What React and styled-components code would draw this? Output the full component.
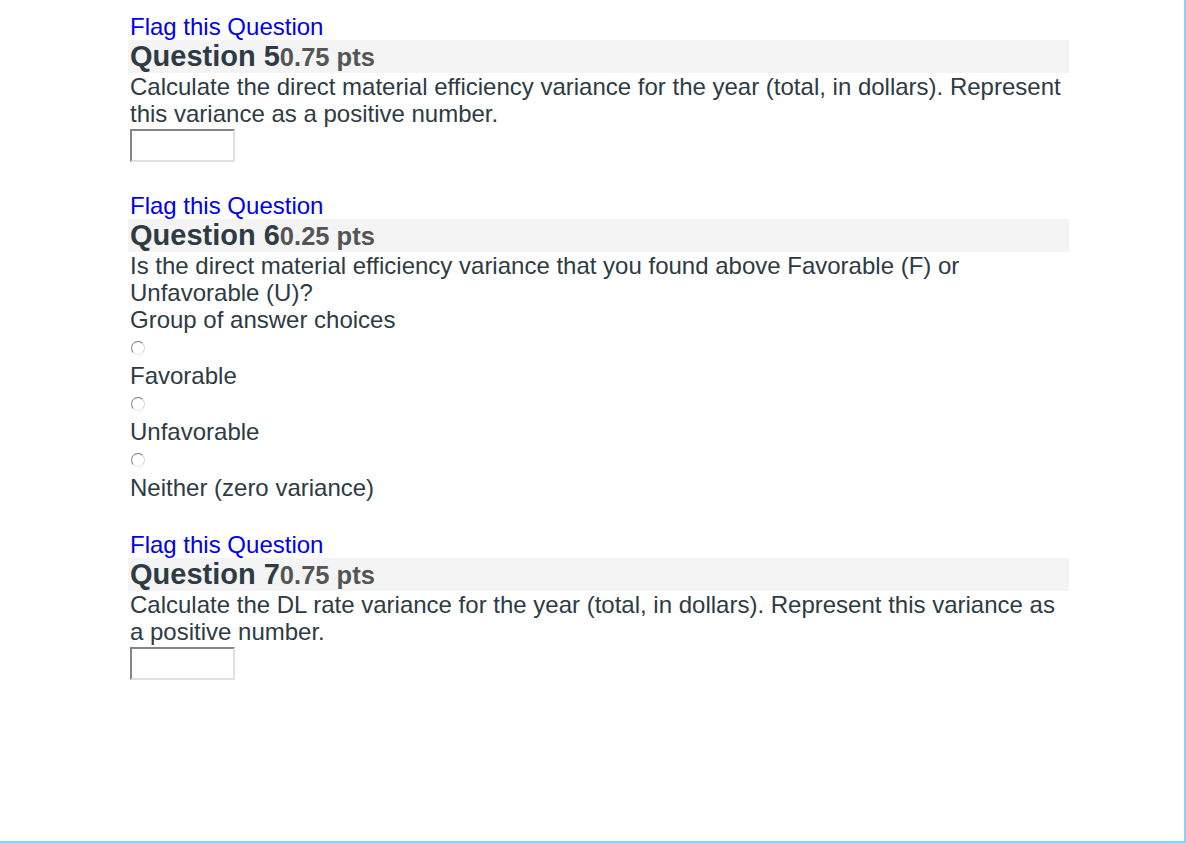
import React from 'react';
import styled, { createGlobalStyle } from 'styled-components';

const Global = createGlobalStyle`
  html, body {
    margin: 0;
    padding: 0;
    background: #ffffff;
  }
  body {
    font-family: "Liberation Sans", Arial, sans-serif;
  }
`

const Page = styled.div`
  box-sizing: border-box;
  width: 1186px;
  height: 843px;
  border-right: 2px solid #87d4f5;
  border-bottom: 2px solid #87d4f5;
  padding: 13px 0 0 128px;
  overflow: hidden;
`

const Column = styled.div`
  width: 941px;
  display: flex;
  flex-direction: column;
  gap: 30px;
`

const Question = styled.div`
  display: flex;
  flex-direction: column;
`

const Flag = styled.a`
  color: #0000ee;
  font-size: 24px;
  line-height: 27px;
  padding-left: 2px;
  text-decoration: none;
  cursor: pointer;
`

const Header = styled.div`
  background: #f4f4f4;
  height: 33px;
  display: flex;
  align-items: baseline;
  padding-left: 2px;
  color: #2d3b45;
  font-size: 29px;
  line-height: 33px;
  font-weight: 700;
`

const Points = styled.span`
  color: #555555;
  font-size: 25.5px;
`

const Text = styled.div`
  color: #2d3b45;
  font-size: 24px;
  line-height: 27px;
  padding-left: 2px;
`

const Answer = styled.input`
  box-sizing: border-box;
  width: 105px;
  height: 33px;
  margin: 2px 0 0 2px;
  border: 2px solid;
  border-color: #858585 #e0e0e0 #e0e0e0 #858585;
  background: #fff;
  outline: none;
`

const Choices = styled.div`
  display: flex;
  flex-direction: column;
`

const RadioRow = styled.div`
  height: 29px;
  display: flex;
  align-items: center;
  padding-left: 3px;
`

const Radio = styled.input`
  appearance: none;
  box-sizing: border-box;
  width: 14px;
  height: 14px;
  margin: 0;
  border-radius: 50%;
  border: 1px solid;
  border-color: #7a7a7a #d6d6d6 #e6e6e6 #8a8a8a;
  background: #fff;
`

function Choice({ label, name }) {
  return (
    <>
      <RadioRow><Radio type="radio" name={name} /></RadioRow>
      <Text>{label}</Text>
    </>
  );
}

export default function App() {
  return (
    <>
      <Global />
      <Page>
        <Column>
          <Question>
            <Flag>Flag this Question</Flag>
            <Header>Question 5<Points>0.75 pts</Points></Header>
            <Text>Calculate the direct material efficiency variance for the year (total, in dollars). Represent this variance as a positive number.</Text>
            <div><Answer type="text" /></div>
          </Question>
          <Question>
            <Flag>Flag this Question</Flag>
            <Header>Question 6<Points>0.25 pts</Points></Header>
            <Text>Is the direct material efficiency variance that you found above Favorable (F) or Unfavorable (U)?</Text>
            <Text>Group of answer choices</Text>
            <Choices>
              <Choice name="q6" label="Favorable" />
              <Choice name="q6" label="Unfavorable" />
              <Choice name="q6" label="Neither (zero variance)" />
            </Choices>
          </Question>
          <Question>
            <Flag>Flag this Question</Flag>
            <Header>Question 7<Points>0.75 pts</Points></Header>
            <Text>Calculate the DL rate variance for the year (total, in dollars). Represent this variance as a positive number.</Text>
            <div><Answer type="text" /></div>
          </Question>
        </Column>
      </Page>
    </>
  );
}
